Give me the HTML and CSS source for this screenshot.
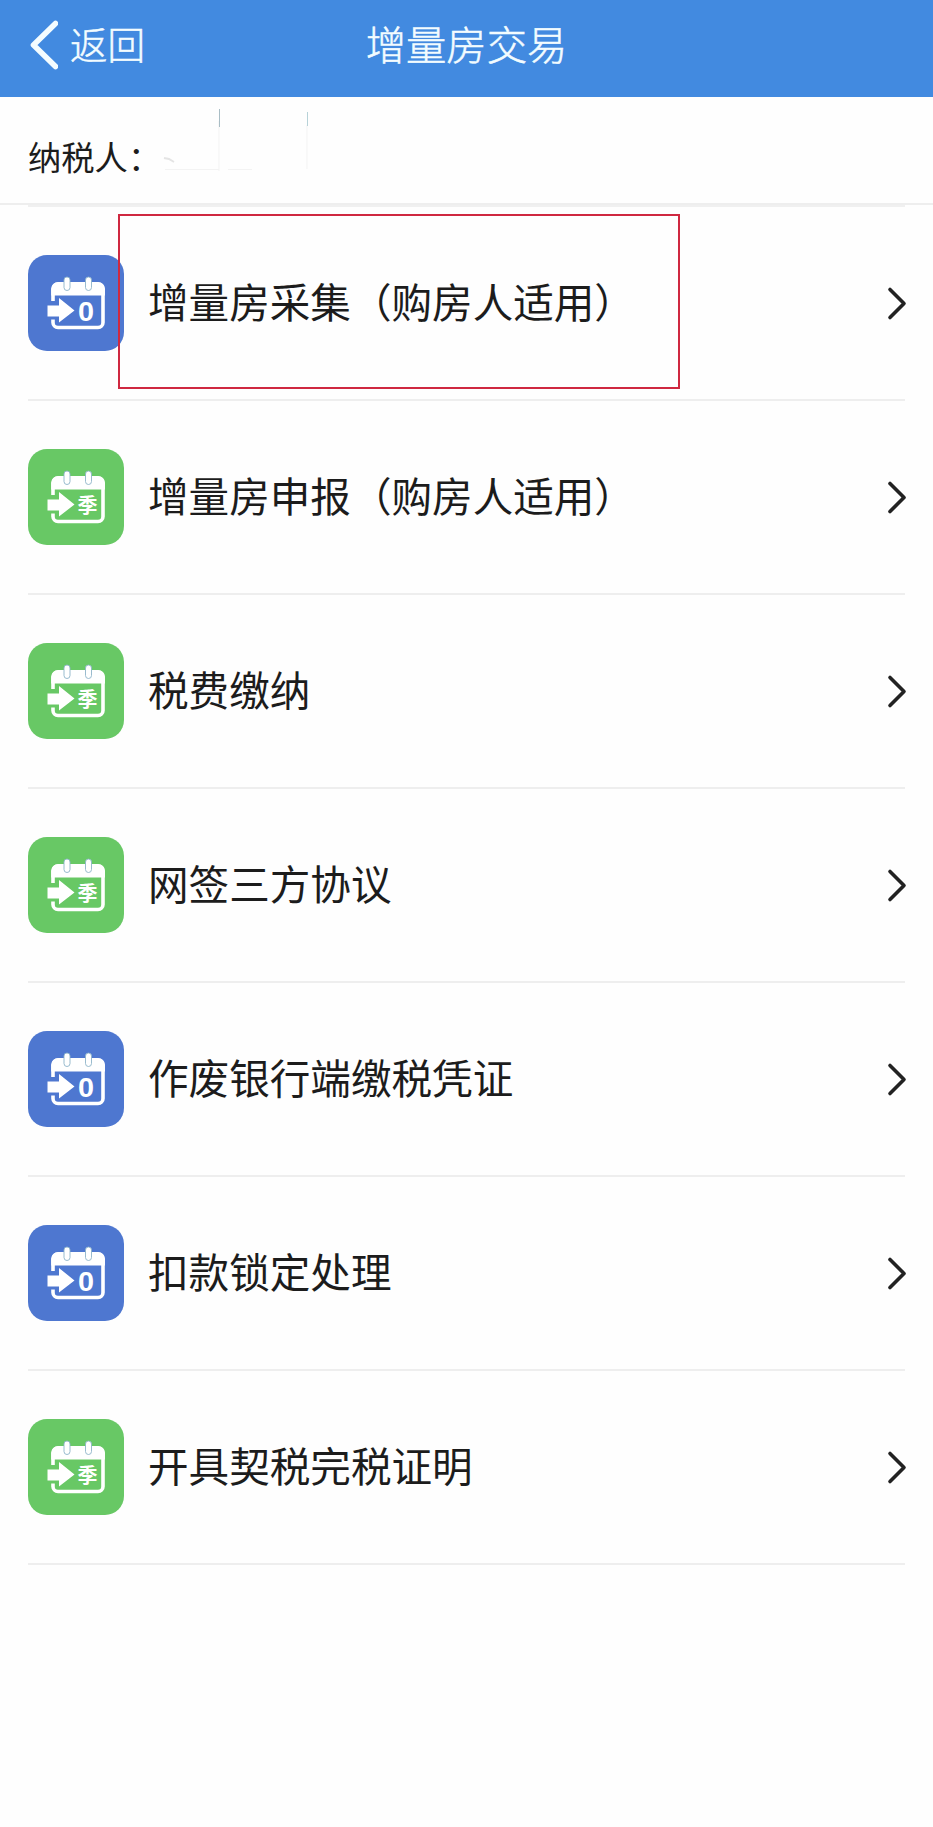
FILE: index.html
```html
<!DOCTYPE html>
<html lang="zh-CN">
<head>
<meta charset="UTF-8">
<title>增量房交易</title>
<link rel="stylesheet" href="styles.css">
</head>
<body>
<svg class="defs" width="0" height="0" aria-hidden="true">
  <symbol id="calendar" viewBox="0 0 96 96">
    <path d="M25 46V34a5 5 0 0 1 5-5h40a5 5 0 0 1 5 5v33.500a5 5 0 0 1-5 5H30a5 5 0 0 1-5-5v-3" fill="none" stroke="#fff" stroke-width="3.600"/>
    <path d="M23.200 40.500V34a7 7 0 0 1 7-7H70a7 7 0 0 1 7 7v6.500z" fill="#fff"/>
    <g class="ring"><rect x="36" y="22" width="6" height="13.500" rx="3"/><rect x="57.500" y="22" width="6" height="13.500" rx="3"/></g>
    <path d="M19.500 50.500h11.500v-7.500l15.500 12.500-15.500 12v-6h-11.500z" fill="#fff"/>
  </symbol>
  <symbol id="chevron" viewBox="0 0 22 36">
    <path d="M5 4.500L19 18.500L5 32.500" fill="none" stroke="#222" stroke-width="3.600" stroke-linecap="round" stroke-linejoin="round"/>
  </symbol>
</svg>
<header class="bar">
  <a class="back">
    <svg width="30" height="52" viewBox="0 0 30 52"><path d="M27.500 4.500L5.500 26L27.500 47.500" fill="none" stroke="#f3fcff" stroke-width="5.600" stroke-linecap="round" stroke-linejoin="round"/></svg>
    <span>返回</span>
  </a>
  <h1 class="title">增量房交易</h1>
</header>
<section class="payer">
  <span>纳税人：</span>
  <svg class="field" width="155" height="64" viewBox="0 0 155 64">
    <path d="M58 14V64M146 18V62M4 62.500H58M67 62.500H91" fill="none" stroke="#f3f3f3"/>
    <path d="M58.500 2V20" stroke="#a9bdc5"/><path d="M146.500 5V19" stroke="#b7d2d8"/>
    <path d="M3 51l5 1 5 3" fill="none" stroke="#e4e4e4" stroke-width="2"/>
  </svg>
</section>
<ul class="list">
  <li class="row marked"><svg class="icon blue" viewBox="0 0 96 96"><use href="#calendar"/><text class="zero" x="58" y="66" textLength="16" lengthAdjust="spacingAndGlyphs">0</text></svg><span class="name">增量房采集（购房人适用）</span><svg class="go"><use href="#chevron"/></svg></li>
  <li class="row"><svg class="icon green" viewBox="0 0 96 96"><use href="#calendar"/><text class="season" x="59.500" y="63.500">季</text></svg><span class="name">增量房申报（购房人适用）</span><svg class="go"><use href="#chevron"/></svg></li>
  <li class="row"><svg class="icon green" viewBox="0 0 96 96"><use href="#calendar"/><text class="season" x="59.500" y="63.500">季</text></svg><span class="name">税费缴纳</span><svg class="go"><use href="#chevron"/></svg></li>
  <li class="row"><svg class="icon green" viewBox="0 0 96 96"><use href="#calendar"/><text class="season" x="59.500" y="63.500">季</text></svg><span class="name">网签三方协议</span><svg class="go"><use href="#chevron"/></svg></li>
  <li class="row"><svg class="icon blue" viewBox="0 0 96 96"><use href="#calendar"/><text class="zero" x="58" y="66" textLength="16" lengthAdjust="spacingAndGlyphs">0</text></svg><span class="name">作废银行端缴税凭证</span><svg class="go"><use href="#chevron"/></svg></li>
  <li class="row"><svg class="icon blue" viewBox="0 0 96 96"><use href="#calendar"/><text class="zero" x="58" y="66" textLength="16" lengthAdjust="spacingAndGlyphs">0</text></svg><span class="name">扣款锁定处理</span><svg class="go"><use href="#chevron"/></svg></li>
  <li class="row"><svg class="icon green" viewBox="0 0 96 96"><use href="#calendar"/><text class="season" x="59.500" y="63.500">季</text></svg><span class="name">开具契税完税证明</span><svg class="go"><use href="#chevron"/></svg></li>
</ul>
</body>
</html>
```

FILE: styles.css
```css
* { box-sizing: border-box; }
body {
  margin: 0;
  min-height: 1827px;
  background: #fefefe;
  color: #1c1c1c;
  font-family: "Noto Sans CJK SC", sans-serif;
}
.defs { display: block; height: 0; }
.bar {
  display: grid;
  grid-template-columns: 1fr auto 1fr;
  align-items: center;
  height: 97px;
  padding: 0 28px 11px;
  background: #428ae0;
  color: #f3fcff;
}
.back { display: flex; align-items: center; gap: 12px; font-size: 37.5px; font-weight: 300; line-height: 50px; -webkit-text-stroke: 0.5px #f3fcff; }
.back svg { margin-top: 4px; }
.title { margin: 0; font-size: 40.3px; font-weight: 300; line-height: 60px; -webkit-text-stroke: 0.5px #f3fcff; }
.payer {
  display: flex;
  height: 108px;
  padding: 10px 28px 0;
  border-bottom: 2px solid #eee;
  font-size: 33.3px;
  line-height: 97px;
}
.list { margin: 0; padding: 0 28px; list-style: none; }
.row {
  position: relative;
  display: flex;
  align-items: center;
  height: 194px;
  border-bottom: 2px solid #eee;
}
.row:first-child { height: 196px; border-top: 2px solid #f0f0f0; }
.icon { width: 96px; height: 96px; border-radius: 19px; flex: none; }
.blue { background: #4e77d0; }
.green { background: #68c865; }
.ring { fill: #fff; stroke: #8db3c8; stroke-width: 0.9; }
.zero { fill: #fff; font: bold 28px "Liberation Sans", sans-serif; text-anchor: middle; }
.season { fill: #fff; font: bold 20px "Noto Sans CJK SC", sans-serif; text-anchor: middle; }
.name { flex: 1; padding: 0 0 4px 24px; font-size: 40.6px; line-height: 60px; white-space: nowrap; }
.go { width: 22px; height: 36px; flex: none; margin-right: -2px; }
.marked::after {
  content: "";
  box-sizing: border-box;
  position: absolute;
  left: 90px;
  top: 7px;
  width: 562px;
  height: 175px;
  border: 2px solid #cf2840;
}
```
